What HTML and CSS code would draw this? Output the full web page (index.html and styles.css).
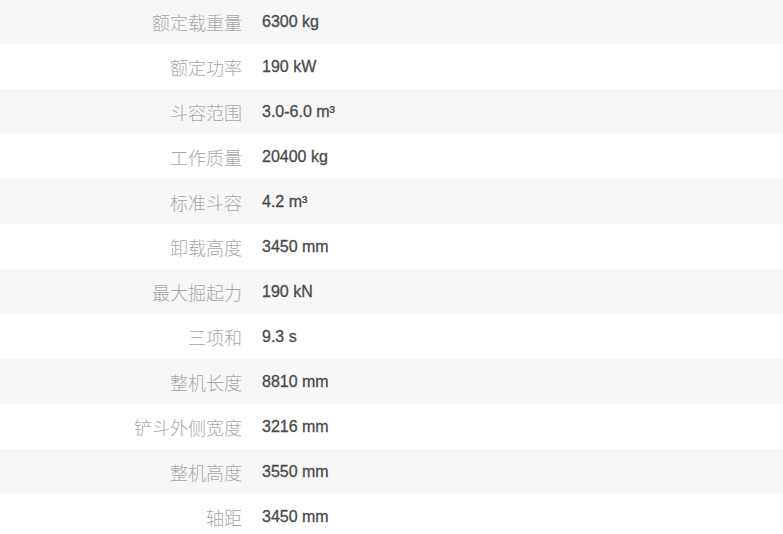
FILE: index.html
```html
<!DOCTYPE html>
<html lang="zh">
<head>
<meta charset="utf-8">
<link rel="stylesheet" href="styles.css">
</head>
<body>
<div class="specs">
  <div class="row"><div class="label">额定载重量</div><div class="value">6300 kg</div></div>
  <div class="row"><div class="label">额定功率</div><div class="value">190 kW</div></div>
  <div class="row"><div class="label">斗容范围</div><div class="value">3.0-6.0 m³</div></div>
  <div class="row"><div class="label">工作质量</div><div class="value">20400 kg</div></div>
  <div class="row"><div class="label">标准斗容</div><div class="value">4.2 m³</div></div>
  <div class="row"><div class="label">卸载高度</div><div class="value">3450 mm</div></div>
  <div class="row"><div class="label">最大掘起力</div><div class="value">190 kN</div></div>
  <div class="row"><div class="label">三项和</div><div class="value">9.3 s</div></div>
  <div class="row"><div class="label">整机长度</div><div class="value">8810 mm</div></div>
  <div class="row"><div class="label">铲斗外侧宽度</div><div class="value">3216 mm</div></div>
  <div class="row"><div class="label">整机高度</div><div class="value">3550 mm</div></div>
  <div class="row"><div class="label">轴距</div><div class="value">3450 mm</div></div>
</div>
</body>
</html>
```
FILE: styles.css
```css
html, body {
  margin: 0;
  padding: 0;
  background: #fff;
}
.specs {
  margin-top: -1px;
  display: flex;
  flex-direction: column;
}
.row {
  display: grid;
  grid-template-columns: 242px 1fr;
  column-gap: 20px;
  align-items: center;
  height: 45px;
}
.row:nth-child(odd) {
  background: #f7f7f7;
}
.label {
  text-align: right;
  font-family: "Noto Sans CJK SC", sans-serif;
  font-weight: 300;
  font-size: 18px;
  color: #a8a8a8;
  line-height: 1;
}
.value {
  font-family: "Liberation Sans", Arial, sans-serif;
  font-size: 16px;
  color: #4a4a4a;
  -webkit-text-stroke: 0.3px #4a4a4a;
  line-height: 1;
}
```
